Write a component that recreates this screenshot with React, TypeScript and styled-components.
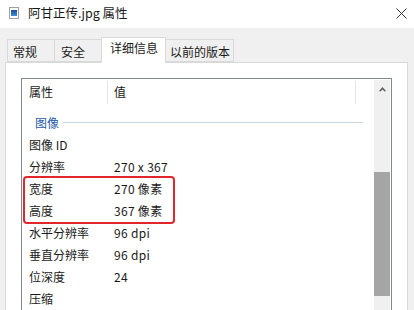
import React from 'react';
import styled, { createGlobalStyle } from 'styled-components';

const GlobalStyle = createGlobalStyle`
    html, body {
        margin: 0;
        padding: 0;
        background: #f0f0f0;
    }
    * {
        box-sizing: border-box;
    }
`;

const Window = styled.div`
    width: 414px;
    height: 310px;
    overflow: hidden;
    background: #f0f0f0;
    font-family: 'Noto Sans CJK SC', 'Noto Sans', sans-serif;
    font-size: 12px;
    color: #1a1a1a;
`;

const TitleBar = styled.div`
    height: 28px;
    background: #fff;
    display: flex;
    align-items: center;
    padding: 0 7px 2px 9px;
`;

const Title = styled.span`
    margin-left: 9px;
    font-size: 12.5px;
    line-height: 16px;
    flex: 1;
`;

const CloseBtn = styled.div`
    width: 12px;
    height: 12px;
    display: flex;
    align-items: center;
    justify-content: center;
`;

const TabStrip = styled.div`
    height: 34px;
    display: flex;
    align-items: flex-end;
    padding-left: 7px;
`;

const Tab = styled.div<{ $w: number; $active?: boolean; $pad: number }>`
    position: relative;
    width: ${(p) => p.$w}px;
    height: ${(p) => (p.$active ? 26 : 23)}px;
    margin-bottom: ${(p) => (p.$active ? -1 : 0)}px;
    margin-right: -1px;
    padding-left: ${(p) => p.$pad}px;
    padding-top: ${(p) => (p.$active ? 1 : 3)}px;
    border: 1px solid #d9d9d9;
    border-bottom: ${(p) => (p.$active ? 'none' : '1px solid #d9d9d9')};
    background: ${(p) => (p.$active ? '#fff' : '#f0f0f0')};
    z-index: ${(p) => (p.$active ? 1 : 0)};
    line-height: 17px;
    white-space: nowrap;
`;

const Panel = styled.div`
    margin: 0 6px 0 5px;
    height: 300px;
    background: #fff;
    border: 1px solid #d9d9d9;
    padding: 15px 0 0 15px;
`;

const ListBox = styled.div`
    width: 371px;
    height: 260px;
    border: 1px solid #828790;
    padding: 1px 1px 0 0;
    display: flex;
`;

const ListContent = styled.div`
    position: relative;
    width: 352px;
`;

const HeaderRow = styled.div`
    display: flex;
    height: 24px;
`;

const HeaderCell = styled.div<{ $w: number; $pad: number }>`
    width: ${(p) => p.$w}px;
    margin-top: 1px;
    padding-left: ${(p) => p.$pad}px;
    border-right: 1px solid #e5e5e5;
    line-height: 22px;
`;

const GroupRow = styled.div`
    display: flex;
    align-items: center;
    height: 30px;
    padding: 7px 10px 0 13px;
    gap: 4px;
    color: #1f5ba6;
    line-height: 22px;
`;

const GroupLine = styled.div`
    flex: 1;
    height: 1px;
    background: #c6d5df;
`;

const Row = styled.div`
    display: flex;
    height: 22px;
    line-height: 22px;
`;

const NameCell = styled.div`
    width: 85px;
    padding-left: 7px;
`;

const ValueCell = styled.div`
    padding-left: 7px;
    letter-spacing: 0.3px;
`;

const Highlight = styled.div`
    position: absolute;
    left: 1px;
    top: 96px;
    width: 152px;
    height: 48px;
    border: 2px solid #e3262b;
    border-radius: 4px;
`;

const ScrollBar = styled.div`
    width: 16px;
    margin-left: 1px;
    background: #f0f0f0;
    display: flex;
    flex-direction: column;
`;

const ArrowBtn = styled.div`
    height: 17px;
    display: flex;
    align-items: center;
    justify-content: center;
    padding-top: 2px;
`;

const Track = styled.div`
    flex: 1;
    padding-top: 75px;
`;

const Thumb = styled.div`
    height: 124px;
    background: #a5a5a5;
`;

const FileIcon = () => (
    <svg width="10" height="12" viewBox="0 0 10 12">
        <defs>
            <linearGradient id="img" x1="0" y1="0" x2="0" y2="1">
                <stop offset="0" stopColor="#1d4f96" />
                <stop offset="1" stopColor="#3f8fd6" />
            </linearGradient>
        </defs>
        <rect x="0.5" y="0.5" width="9" height="11" fill="#fff" stroke="#a0a0a0" />
        <rect x="2" y="3" width="6" height="6" fill="url(#img)" />
    </svg>
);

const rows = [
    { name: '图像 ID', value: '' },
    { name: '分辨率', value: '270 x 367' },
    { name: '宽度', value: '270 像素' },
    { name: '高度', value: '367 像素' },
    { name: '水平分辨率', value: '96 dpi' },
    { name: '垂直分辨率', value: '96 dpi' },
    { name: '位深度', value: '24' },
    { name: '压缩', value: '' },
];

export default function App() {
    return (
        <>
            <GlobalStyle />
            <Window>
                <TitleBar>
                    <FileIcon />
                    <Title>阿甘正传.jpg 属性</Title>
                    <CloseBtn>
                        <svg width="11" height="11" viewBox="0 0 11 11">
                            <path d="M0.5 0.5L10.5 10.5M10.5 0.5L0.5 10.5" stroke="#333" strokeWidth="1" />
                        </svg>
                    </CloseBtn>
                </TitleBar>
                <TabStrip>
                    <Tab $w={48} $pad={5}>常规</Tab>
                    <Tab $w={48} $pad={6}>安全</Tab>
                    <Tab $w={65} $pad={8} $active>详细信息</Tab>
                    <Tab $w={69} $pad={4}>以前的版本</Tab>
                </TabStrip>
                <Panel>
                    <ListBox>
                        <ListContent>
                            <HeaderRow>
                                <HeaderCell $w={86} $pad={7}>属性</HeaderCell>
                                <HeaderCell $w={248} $pad={6}>值</HeaderCell>
                            </HeaderRow>
                            <GroupRow>
                                图像
                                <GroupLine />
                            </GroupRow>
                            {rows.map((r) => (
                                <Row key={r.name}>
                                    <NameCell>{r.name}</NameCell>
                                    <ValueCell>{r.value}</ValueCell>
                                </Row>
                            ))}
                            <Highlight />
                        </ListContent>
                        <ScrollBar>
                            <ArrowBtn>
                                <svg width="7" height="5" viewBox="0 0 7 5">
                                    <path d="M3.5 0L7 4L5.5 4.6L3.5 2.4L1.5 4.6L0 4Z" fill="#606060" />
                                </svg>
                            </ArrowBtn>
                            <Track>
                                <Thumb />
                            </Track>
                        </ScrollBar>
                    </ListBox>
                </Panel>
            </Window>
        </>
    );
}
